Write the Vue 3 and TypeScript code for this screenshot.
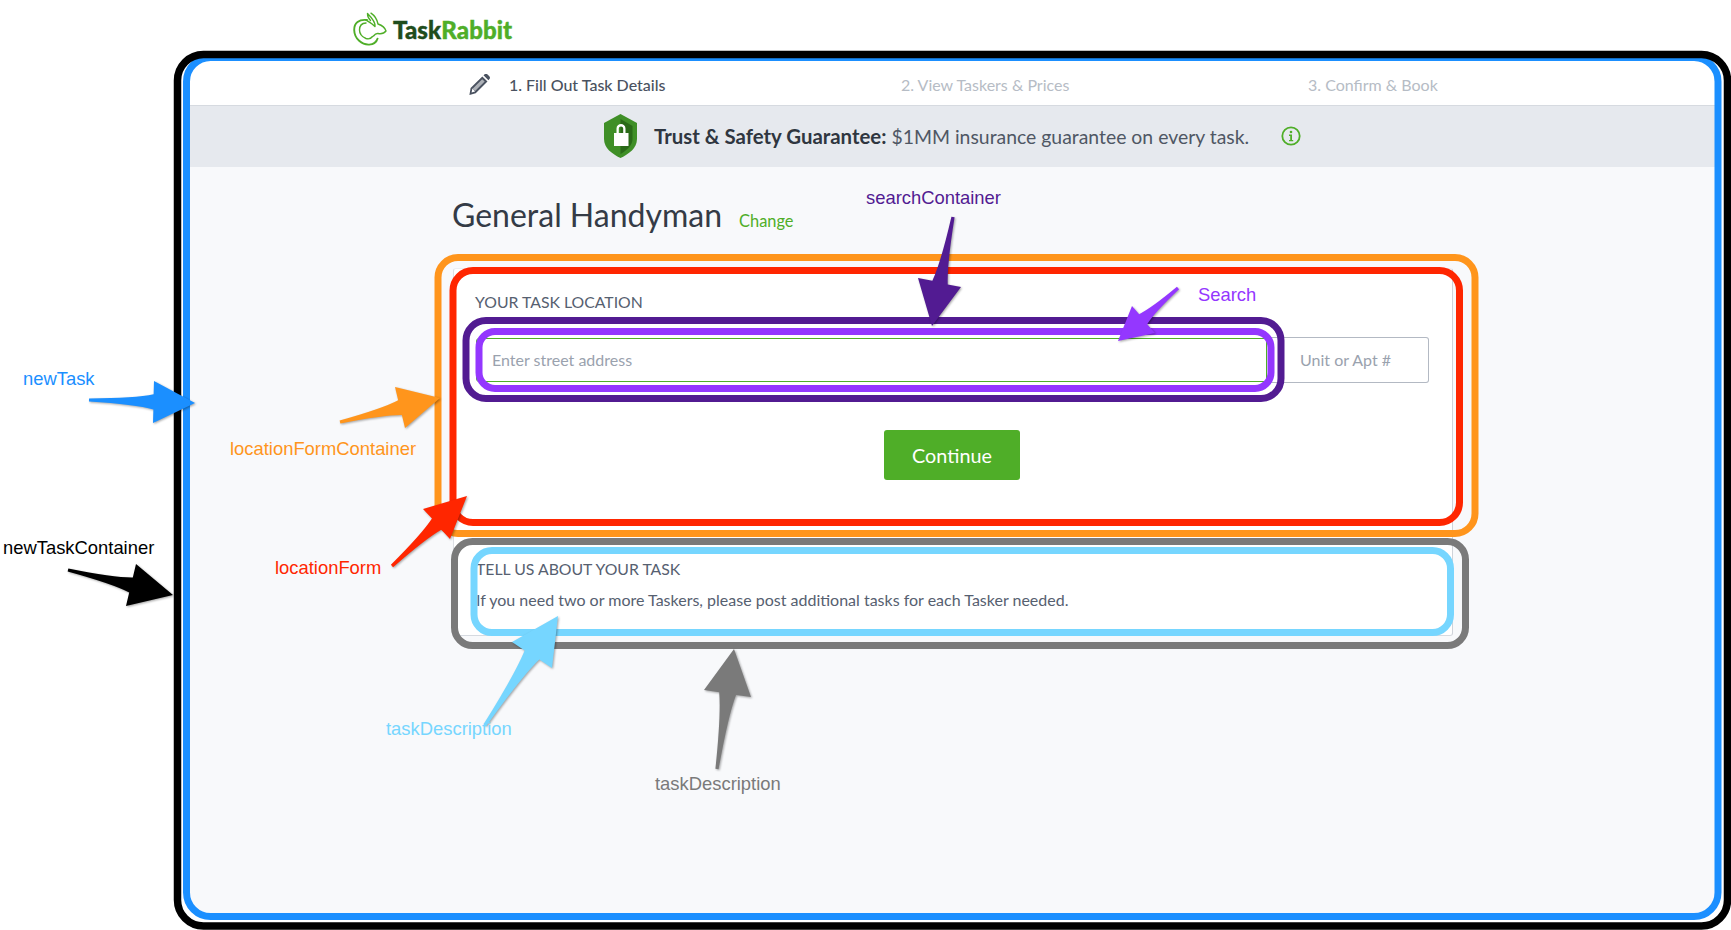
<script setup lang="ts">
type Pt = [number, number];

interface Frame { x: number; y: number; w: number; h: number; stroke: string; sw: number; r: number }
interface Arrow { tail: Pt; tip: Pt; a: Pt; b: Pt; fill: string }
interface Label { text: string; x: number; y: number; fill: string }

const steps = [
  { text: '1. Fill Out Task Details', active: true },
  { text: '2. View Taskers & Prices', active: false },
  { text: '3. Confirm & Book', active: false },
];

// annotation boxes drawn on top of the page, in page coordinates
const frames: Frame[] = [
  { x: 186.5, y: 57.5, w: 1531.5, h: 859, stroke: '#1b8fff', sw: 7, r: 24 },
  { x: 177.5, y: 54.5, w: 1550, h: 871.5, stroke: '#000', sw: 7.5, r: 26 },
  { x: 438, y: 257.5, w: 1037, h: 276, stroke: '#ff951c', sw: 7, r: 20 },
  { x: 453, y: 270.5, w: 1006.5, h: 252, stroke: '#ff2600', sw: 7, r: 20 },
  { x: 466, y: 320.5, w: 815, h: 78, stroke: '#521b92', sw: 7, r: 20 },
  { x: 479, y: 331.5, w: 792, h: 57, stroke: '#9437ff', sw: 7, r: 16 },
  { x: 454.5, y: 541.5, w: 1011, h: 104, stroke: '#7a7a7a', sw: 7, r: 18 },
  { x: 474, y: 550.5, w: 976.5, h: 82, stroke: '#76d6ff', sw: 7, r: 18 },
];

const arrows: Arrow[] = [
  { tail: [89, 400], tip: [195, 403], a: [154, 381], b: [153, 423], fill: '#1b8fff' },
  { tail: [340, 422], tip: [440, 398], a: [395, 387], b: [405, 428], fill: '#ff951c' },
  { tail: [392, 566], tip: [467, 496], a: [423, 509], b: [450, 539], fill: '#ff2600' },
  { tail: [68, 570], tip: [173, 595], a: [136, 564], b: [126, 606], fill: '#000' },
  { tail: [953, 217], tip: [932, 326], a: [918, 278], b: [961, 287], fill: '#521b92' },
  { tail: [1178, 288], tip: [1118, 341], a: [1132, 306], b: [1155, 333], fill: '#9437ff' },
  { tail: [485, 725], tip: [558, 616], a: [512, 642], b: [552, 668], fill: '#76d6ff' },
  { tail: [717, 769], tip: [734, 649], a: [704, 690], b: [751, 697], fill: '#7a7a7a' },
];

const labels: Label[] = [
  { text: 'newTask', x: 23, y: 385, fill: '#1b8fff' },
  { text: 'newTaskContainer', x: 3, y: 554, fill: '#000' },
  { text: 'locationFormContainer', x: 230, y: 455, fill: '#ff951c' },
  { text: 'locationForm', x: 275, y: 574, fill: '#ff2600' },
  { text: 'searchContainer', x: 866, y: 204, fill: '#521b92' },
  { text: 'Search', x: 1198, y: 301, fill: '#9437ff' },
  { text: 'taskDescription', x: 386, y: 735, fill: '#76d6ff' },
  { text: 'taskDescription', x: 655, y: 790, fill: '#7a7a7a' },
];

// shaft swells from a blunt tail to a neck level with each barb
const arrowPath = ({ tail, tip, a, b }: Arrow) => {
  const dx = tip[0] - tail[0];
  const dy = tip[1] - tail[1];
  const len2 = dx * dx + dy * dy;
  const side = (barb: Pt) => {
    const t = ((barb[0] - tail[0]) * dx + (barb[1] - tail[1]) * dy) / len2;
    const mx = tail[0] + dx * t;
    const my = tail[1] + dy * t;
    const ox = barb[0] - mx;
    const oy = barb[1] - my;
    const k = 1.6 / Math.hypot(ox, oy);
    return {
      start: [tail[0] + ox * k, tail[1] + oy * k] as Pt,
      ctrl: [tail[0] + dx * t * 0.72 + ox * 0.15, tail[1] + dy * t * 0.72 + oy * 0.15] as Pt,
      neck: [mx + ox * 0.36, my + oy * 0.36] as Pt,
    };
  };
  const sa = side(a);
  const sb = side(b);
  return `M${sa.start} Q${sa.ctrl} ${sa.neck} L${a} L${tip} L${b} L${sb.neck} Q${sb.ctrl} ${sb.start} Z`;
};
</script>

<template>
  <div class="page">
    <header class="brand">
      <svg class="rabbit" viewBox="0 0 34 34" width="34" height="34" fill="none" stroke="#4fae28" stroke-linecap="round" stroke-linejoin="round">
        <path stroke-width="1.900" d="M14 8C6 7 1 11 1.200 18c.2 9 8 15 15 14.600 4.400-.2 7.400-2.600 8.400-6" />
        <path stroke-width="1.400" d="M13 11c-4 .2-6.500 3-6.500 7 0 4 3 7 6.500 8.500 3 1 5 0 6.500-2" />
        <path stroke-width="1.400" d="M13 8c2.500 1.500 7 4 9 6.500C22.500 11 18 5 14.500 1.500c0 3 1 5 3 7M18 1.200c3 2 6 6 7 10.800 3 1 7 3.500 8 7-1.500 2-5 3-8 2.500-1.500-.2-3 .5-4.500 2.500" />
      </svg>
      <span class="wordmark"><span class="task">Task</span><span class="rabbit-word">Rabbit</span></span>
    </header>

    <main class="panel">
      <nav class="steps">
        <div v-for="(s, i) in steps" :key="i" class="step" :class="{ active: s.active }">
          <svg v-if="s.active" class="pencil" viewBox="0 0 21 21" width="21" height="21">
            <path fill="#4a5260" d="M14.500 1.200 16 0c.8-.4 1.600-.3 2.300.3l2 2c.7.700.9 1.700.4 2.500l-1.300 1.400zM13.300 2.400l5.200 5.100L6.700 19.300.4 21l1.200-6.900zM3.400 14.600l-.8 3.900 3.500-1z" />
            <path fill="#fff" d="M13.200 5.200l2.500 2.400-9.600 9.500-2.500-2.400z" opacity=".55" />
          </svg>
          <span>{{ s.text }}</span>
        </div>
      </nav>

      <div class="guarantee">
        <svg class="shield" viewBox="0 0 33 44" width="33" height="44">
          <path fill="#3f8f27" d="M16.500 0 33 9v16c0 9-8 15-16.500 19C8 40 0 34 0 25V9z" />
          <path fill="#2a6a18" d="M16.500 5 28.500 12v13c0 6-5 11-12 15z" />
          <path fill="#fff" d="M10 19h2.500v-4.500c0-6 9-6 9 0V19H24.500v13H10zM14.800 19h4.400v-4.500c0-2.700-4.400-2.700-4.400 0z" />
        </svg>
        <p class="guarantee-text"><strong>Trust &amp; Safety Guarantee:</strong> $1MM insurance guarantee on every task.</p>
        <svg class="info" viewBox="0 0 20 20" width="20" height="20">
          <circle cx="10" cy="10" r="8.700" fill="none" stroke="#4fae28" stroke-width="1.800" />
          <circle cx="10" cy="6" r="1.300" fill="#4fae28" />
          <path fill="#4fae28" d="M8 8.600h3v5.300h1.200v1.300H8v-1.300h1.200V9.900H8z" />
        </svg>
      </div>

      <section class="content">
        <div class="title-row">
          <h1>General Handyman</h1>
          <a class="change">Change</a>
        </div>

        <div class="card">
          <form class="location" @submit.prevent>
            <label class="section-label">Your Task Location</label>
            <div class="address-row">
              <input class="street" type="text" placeholder="Enter street address" />
              <input class="unit" type="text" placeholder="Unit or Apt #" />
            </div>
            <button class="continue" type="submit">Continue</button>
          </form>
          <div class="description">
            <div class="section-label">Tell Us About Your Task</div>
            <p>If you need two or more Taskers, please post additional tasks for each Tasker needed.</p>
          </div>
        </div>
      </section>
    </main>

    <svg class="notes" viewBox="0 0 1731 930" width="1731" height="930">
      <rect
        v-for="(f, i) in frames"
        :key="'f' + i"
        :x="f.x"
        :y="f.y"
        :width="f.w"
        :height="f.h"
        :rx="f.r"
        fill="none"
        :stroke="f.stroke"
        :stroke-width="f.sw"
      />
      <path v-for="(a, i) in arrows" :key="'a' + i" class="arrow" :d="arrowPath(a)" :fill="a.fill" />
      <text v-for="(l, i) in labels" :key="'l' + i" :x="l.x" :y="l.y" :fill="l.fill">{{ l.text }}</text>
    </svg>
  </div>
</template>

<style>
html, body {
  margin: 0;
  background: #fff;
  overflow: hidden;
}
</style>

<style scoped>
* {
  box-sizing: border-box;
}
.page {
  position: relative;
  width: 1731px;
  height: 930px;
  overflow: hidden;
  background: #fff;
  font-family: Lato, "Open Sans", sans-serif;
  color: #566070;
}
.brand {
  height: 61px;
  padding: 12px 0 0 353px;
  display: flex;
  align-items: flex-start;
  gap: 6px;
}
.rabbit {
  flex: none;
}
.wordmark {
  font-size: 24px;
  font-weight: 900;
  line-height: 36px;
  letter-spacing: 0.1px;
  -webkit-text-stroke: 0.4px currentColor;
}
.task {
  color: #1f4d1c;
}
.rabbit-word {
  color: #4fae28;
}
.panel {
  margin-left: 190px;
  width: 1525px;
  height: 852px;
  border-radius: 20px;
  overflow: hidden;
  background: #f8f9fb;
}
.steps {
  height: 45px;
  background: #fff;
  border-bottom: 1px solid #d6dae0;
  display: grid;
  grid-template-columns: 432px 407px 1fr;
  align-items: center;
  font-size: 16px;
  color: #b6bcc5;
  padding: 3px 0 0 279px;
}
.step {
  display: flex;
  align-items: center;
  gap: 19px;
}
.step.active {
  color: #4a5260;
  font-weight: 500;
}
.guarantee {
  height: 61px;
  padding: 0 0 2px 414px;
  background: #e6e9ee;
  display: flex;
  align-items: center;
}
.shield {
  flex: none;
  margin-right: 17px;
}
.guarantee-text {
  margin: 0 32px 0 0;
  font-size: 19.400px;
  color: #4f5764;
}
.guarantee-text strong {
  color: #2f3640;
  font-size: 20.400px;
  font-weight: 700;
}
.content {
  padding: 29px 0 0 263px;
}
.title-row {
  display: flex;
  align-items: baseline;
  gap: 17px;
  height: 72px;
}
h1 {
  margin: 0 0 0 -1px;
  font-size: 32px;
  font-weight: 400;
  line-height: 38px;
  color: #343b46;
}
.change {
  font-size: 16.400px;
  color: #4fae28;
}
.card {
  width: 1000px;
  height: 368px;
  background: #fff;
  border: 1px solid #dde0e5;
  border-top-color: #eceef1;
  border-right-color: #cfd3d9;
  border-bottom-color: #d6dae0;
  border-radius: 3px;
}
.location {
  height: 262px;
  padding: 23px 0 0 21px;
  display: flex;
  flex-direction: column;
}
.section-label {
  font-size: 15.800px;
  line-height: 20px;
  text-transform: uppercase;
  color: #566070;
}
.address-row {
  display: flex;
  align-items: center;
  margin: 25px 0 0 1px;
}
input {
  font: inherit;
  font-size: 16px;
  background: #fff;
  outline: none;
  padding: 0 15px 2px;
}
input::placeholder {
  color: #9aa2ae;
  opacity: 1;
}
.street {
  width: 791px;
  height: 44px;
  border: 1px solid #4fae28;
  border-radius: 3px 0 0 3px;
}
.unit {
  width: 162px;
  height: 46px;
  border: 1px solid #b3b9c3;
  border-left: none;
  border-radius: 0 3px 3px 0;
  padding-left: 33px;
}
.continue {
  align-self: flex-start;
  margin: 47px 0 0 409px;
  width: 136px;
  height: 50px;
  border: none;
  border-radius: 3px;
  background: #4fae28;
  color: #fff;
  font: inherit;
  font-size: 19.800px;
}
.description {
  padding: 28px 0 0 22px;
}
.description p {
  margin: 11px 0 0;
  font-size: 16px;
  line-height: 20px;
  color: #566070;
}
.notes {
  position: absolute;
  left: 0;
  top: 0;
  pointer-events: none;
  font-family: "Liberation Sans", Arial, sans-serif;
  font-size: 18.400px;
}
.arrow {
  filter: drop-shadow(1px 1px 1px rgba(0, 0, 0, 0.35));
}
</style>
